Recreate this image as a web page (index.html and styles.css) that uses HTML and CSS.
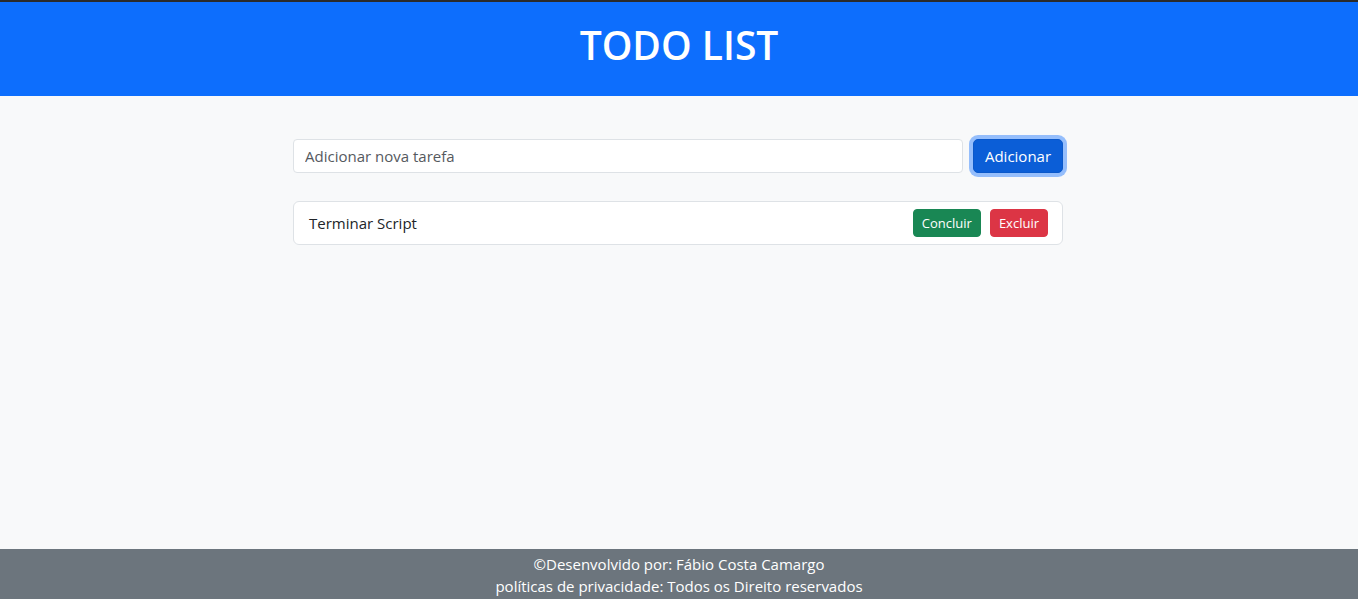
FILE: index.html
```html
<!DOCTYPE html>
<html lang="pt-BR">
<head>
<meta charset="utf-8">
<title>TODO LIST</title>
<link rel="stylesheet" href="styles.css">
</head>
<body>
<div class="page">
  <header class="header">
    <h1 class="title">TODO LIST</h1>
  </header>
  <main class="main">
    <div class="container">
      <form class="add-form">
        <input class="task-input" type="text" placeholder="Adicionar nova tarefa">
        <button class="btn btn-add" type="button">Adicionar</button>
      </form>
      <ul class="task-list">
        <li class="task-item">
          <span class="task-text">Terminar Script</span>
          <div class="task-actions">
            <button class="btn btn-sm btn-success" type="button">Concluir</button>
            <button class="btn btn-sm btn-danger" type="button">Excluir</button>
          </div>
        </li>
      </ul>
    </div>
  </main>
  <footer class="footer">
    <p class="footer-line">©Desenvolvido por: Fábio Costa Camargo</p>
    <p class="footer-line">políticas de privacidade: Todos os Direito reservados</p>
  </footer>
</div>
</body>
</html>
```

FILE: styles.css
```css
* { box-sizing: border-box; }
html, body { margin: 0; padding: 0; height: 100%; }
body {
  font-family: "Open Sans", "Noto Sans", sans-serif;
  background: #f8f9fa;
  color: #212529;
}
.page {
  min-height: 599px;
  height: 100%;
  display: flex;
  flex-direction: column;
}
.header {
  background: #0d6efd;
  border-top: 2px solid #2a2a2a;
  height: 96px;
  padding-bottom: 9px;
  display: flex;
  align-items: center;
  justify-content: center;
}
.title {
  margin: 0;
  color: #fff;
  font-size: 39px;
  font-weight: 600;
  line-height: 1;
}
.main { flex: 1; }
.container {
  width: 770px;
  margin: 0 auto 0 calc(50% - 386px);
  padding-top: 43px;
}
.add-form {
  display: flex;
  gap: 10px;
  margin: 0 0 28px;
}
.task-input {
  flex: 1;
  height: 34px;
  padding: 0 11px;
  font-family: inherit;
  font-size: 15px;
  color: #212529;
  background: #fff;
  border: 1px solid #dee2e6;
  border-radius: 4px;
  outline: none;
}
.task-input::placeholder { color: #55595e; }
.btn {
  font-family: inherit;
  border: 1px solid transparent;
  color: #fff;
  cursor: pointer;
}
.btn-add {
  width: 90px;
  height: 34px;
  font-size: 15px;
  background: #0b5ed7;
  border-color: #0a58ca;
  border-radius: 5px;
  box-shadow: 0 0 0 4px rgba(49, 132, 253, 0.5);
}
.task-list {
  list-style: none;
  margin: 0;
  padding: 0;
}
.task-item {
  display: flex;
  align-items: center;
  justify-content: space-between;
  height: 44px;
  padding: 0 14px 0 15px;
  background: #fff;
  border: 1px solid #dee2e6;
  border-radius: 6px;
}
.task-text { font-size: 15px; color: #212529; }
.task-actions { display: flex; gap: 9px; }
.btn-sm {
  height: 28px;
  padding: 0 8px;
  font-size: 13px;
  border-radius: 4px;
}
.btn-success { background: #198754; border-color: #198754; }
.btn-danger { background: #dc3545; border-color: #dc3545; }
.footer {
  background: #6c757d;
  color: #fff;
  height: 50px;
  padding-top: 4px;
  text-align: center;
}
.footer-line {
  margin: 0;
  font-size: 15px;
  line-height: 22px;
}
```
